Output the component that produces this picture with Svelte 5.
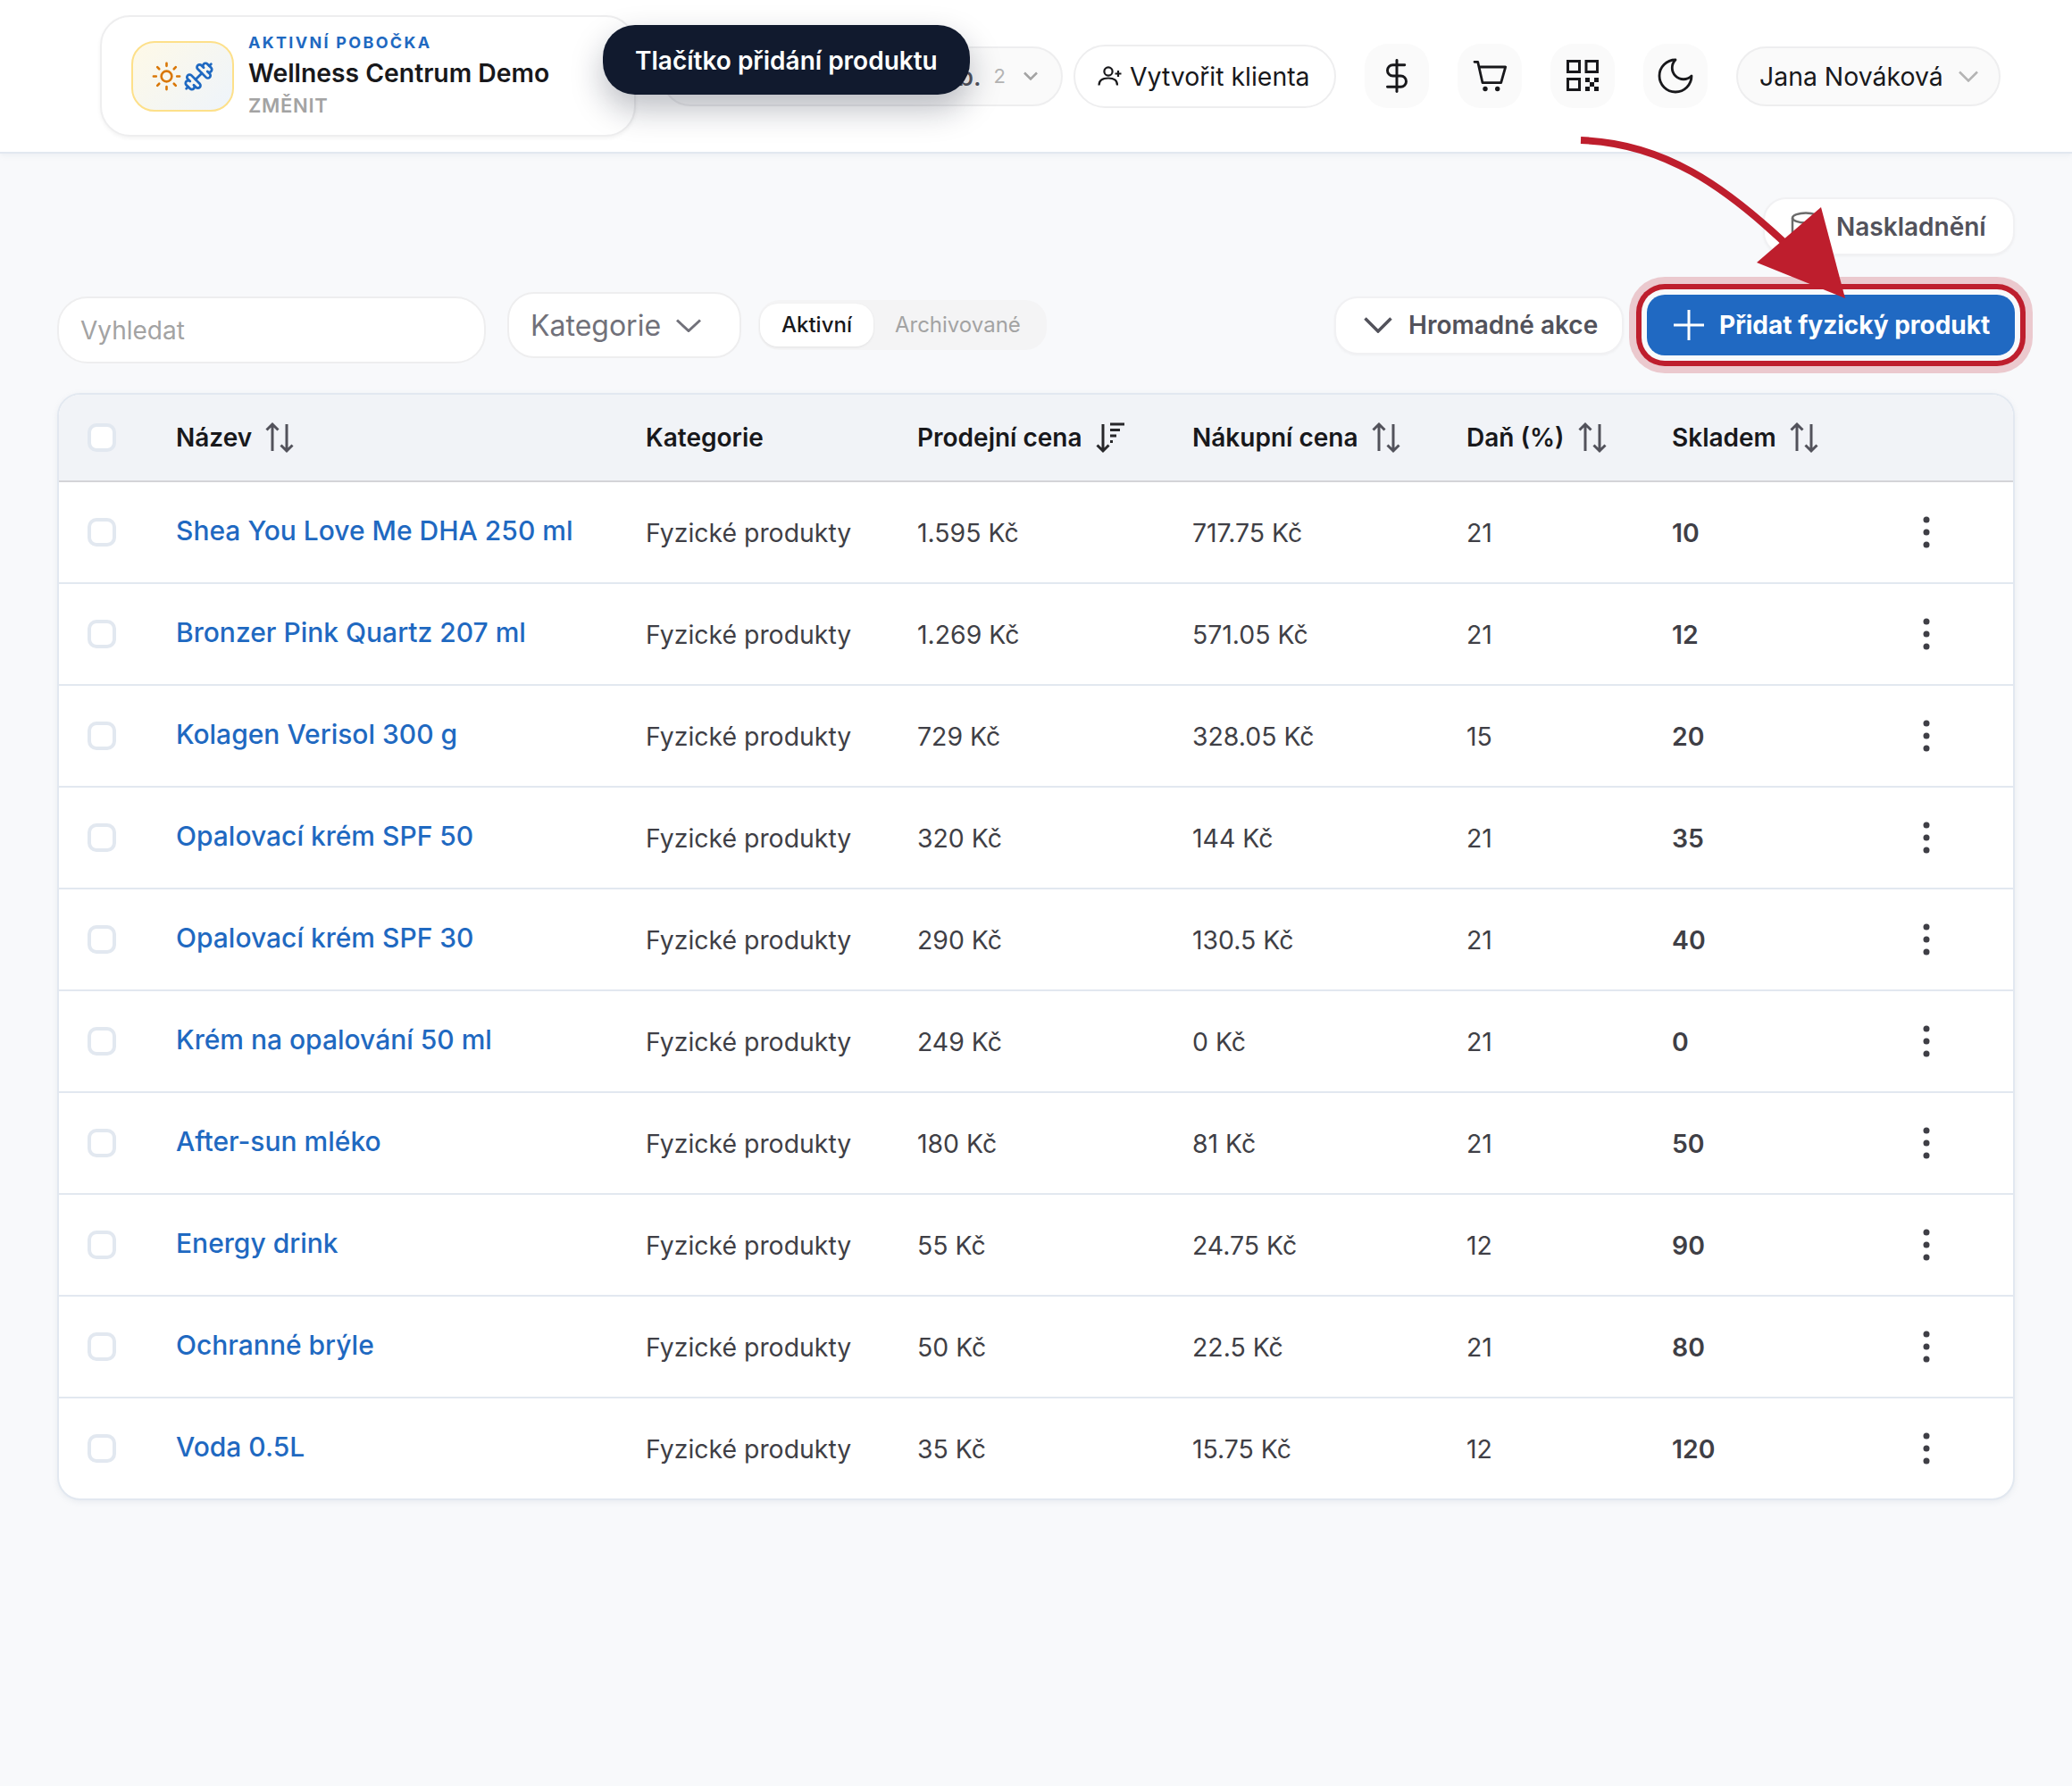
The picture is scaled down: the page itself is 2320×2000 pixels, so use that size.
<script>
  const products = [
    { name: 'Shea You Love Me DHA 250 ml', price: '1.595 Kč', cost: '717.75 Kč', tax: 21, stock: 10 },
    { name: 'Bronzer Pink Quartz 207 ml', price: '1.269 Kč', cost: '571.05 Kč', tax: 21, stock: 12 },
    { name: 'Kolagen Verisol 300 g', price: '729 Kč', cost: '328.05 Kč', tax: 15, stock: 20 },
    { name: 'Opalovací krém SPF 50', price: '320 Kč', cost: '144 Kč', tax: 21, stock: 35 },
    { name: 'Opalovací krém SPF 30', price: '290 Kč', cost: '130.5 Kč', tax: 21, stock: 40 },
    { name: 'Krém na opalování 50 ml', price: '249 Kč', cost: '0 Kč', tax: 21, stock: 0 },
    { name: 'After-sun mléko', price: '180 Kč', cost: '81 Kč', tax: 21, stock: 50 },
    { name: 'Energy drink', price: '55 Kč', cost: '24.75 Kč', tax: 12, stock: 90 },
    { name: 'Ochranné brýle', price: '50 Kč', cost: '22.5 Kč', tax: 21, stock: 80 },
    { name: 'Voda 0.5L', price: '35 Kč', cost: '15.75 Kč', tax: 12, stock: 120 },
  ];
</script>

{#snippet sortIcon()}
  <svg class="sort" width="34" height="36" viewBox="0 0 34 36" fill="none" stroke="#52525b" stroke-width="3">
    <path d="M9 3v30M2.500 9.500 9 3l6.500 6.500" />
    <path d="M25 3v30M18.500 26.500 25 33l6.500-6.500" />
  </svg>
{/snippet}

<div class="page">
  <header class="topbar">
    <div class="branch">
      <div class="branch-logo">
        <svg width="35" height="35" viewBox="0 0 24 24" fill="none" stroke="#d97706" stroke-width="1.8" stroke-linecap="round">
          <circle cx="12" cy="12" r="4" />
          <path d="M12 2v2M12 20v2M4.930 4.930l1.410 1.410M17.660 17.660l1.410 1.410M2 12h2M20 12h2M6.340 17.660l-1.410 1.410M19.070 4.930l-1.410 1.410" />
        </svg>
        <svg width="35" height="35" viewBox="0 0 24 24" fill="none" stroke="#1f69c1" stroke-width="1.900" stroke-linecap="round" stroke-linejoin="round">
          <g transform="translate(24 0) scale(-1 1)">
            <path d="M14.400 14.400 9.600 9.600" />
            <path d="M18.657 21.485a2 2 0 1 1-2.829-2.828l-1.767 1.768a2 2 0 1 1-2.829-2.829l6.364-6.364a2 2 0 1 1 2.829 2.829l-1.768 1.767a2 2 0 1 1 2.828 2.829z" />
            <path d="m21.500 21.500-1.400-1.400" />
            <path d="M3.900 3.900 2.500 2.500" />
            <path d="M6.404 12.768a2 2 0 1 1-2.829-2.829l1.768-1.767a2 2 0 1 1-2.828-2.829l2.828-2.828a2 2 0 1 1 2.829 2.828l1.767-1.768a2 2 0 1 1 2.829 2.829z" />
          </g>
        </svg>
      </div>
      <div class="branch-text">
        <div class="branch-label">AKTIVNÍ POBOČKA</div>
        <div class="branch-name">Wellness Centrum Demo</div>
        <div class="branch-change">ZMĚNIT</div>
      </div>
    </div>

    <div class="pill branch-count">
      <span class="count-label">Pob.</span>
      <span class="count-num">2</span>
      <svg width="16" height="10" viewBox="0 0 16 10" fill="none" stroke="#a3a3a3" stroke-width="2.500"><path d="M1 1.500 8 8.500l7-7" /></svg>
    </div>

    <button class="pill create-client">
      <svg width="27" height="22" viewBox="0 0 27 22" fill="none" stroke="#18181b" stroke-width="2.200">
        <circle cx="12" cy="6" r="4.600" />
        <path d="M1.500 21.500c0-5.500 4-8 10.500-8s10 2.500 10 8" />
        <path d="M19.500 8.500h7M23 5v7" />
      </svg>
      Vytvořit klienta
    </button>

    <button class="icon-btn" aria-label="Ceny">
      <svg width="42" height="42" viewBox="0 0 24 24" fill="none" stroke="#18181b" stroke-width="1.700" stroke-linecap="round" stroke-linejoin="round">
        <path d="M12 2v20" />
        <path d="M17 5H9.500a3.500 3.500 0 0 0 0 7h5a3.500 3.500 0 0 1 0 7H6" />
      </svg>
    </button>
    <button class="icon-btn" aria-label="Košík">
      <svg width="38" height="38" viewBox="0 0 38 38" fill="none" stroke="#18181b" stroke-width="2.800" stroke-linejoin="round" stroke-linecap="round">
        <path d="M2 3.300h3.700L11 26.700h20.700L36.700 9H7" />
        <circle cx="14" cy="33.500" r="2.700" fill="#18181b" stroke="none" />
        <circle cx="27.700" cy="33.500" r="2.700" fill="#18181b" stroke="none" />
      </svg>
    </button>
    <button class="icon-btn" aria-label="QR kód">
      <svg width="36" height="36" viewBox="0 0 36 36" fill="none" stroke="#18181b" stroke-width="3">
        <rect x="1.500" y="1.500" width="13" height="12" />
        <rect x="22" y="1.500" width="12.500" height="12" />
        <rect x="1.500" y="21.500" width="13" height="12" />
        <path fill="#18181b" stroke="none" d="M21 20h5v5h-5zM31 20h5v5h-5zM26 25h5v5h-5zM21 30h5v5h-5zM31 30h5v5h-5z" />
      </svg>
    </button>
    <button class="icon-btn" aria-label="Tmavý režim">
      <svg width="48" height="48" viewBox="0 0 24 24" fill="none" stroke="#18181b" stroke-width="1.400" stroke-linecap="round" stroke-linejoin="round">
        <path d="M12 3a6 6 0 0 0 9 9 9 9 0 1 1-9-9Z" />
      </svg>
    </button>

    <button class="pill user-menu">
      Jana Nováková
      <svg width="22" height="13" viewBox="0 0 22 13" fill="none" stroke="#b4b4b4" stroke-width="2.500"><path d="M1 1.500 11 11.500l10-10" /></svg>
    </button>
  </header>

  <main class="content">
    <div class="top-actions">
      <button class="ghost-btn restock">
        <svg width="36" height="36" viewBox="0 0 36 36" fill="none" stroke="#6b6b6b" stroke-width="2.500">
          <ellipse cx="18" cy="8" rx="15" ry="5.500" />
          <path d="M3 8v20c0 3 6.700 5.500 15 5.500S33 31 33 28V8" />
        </svg>
        Naskladnění
      </button>
    </div>

    <div class="filters">
      <input class="search" type="text" placeholder="Vyhledat" />
      <button class="category">
        Kategorie
        <svg width="28" height="15" viewBox="0 0 28 15" fill="none" stroke="#71717a" stroke-width="3"><path d="M1 1.500 14 13.500 27 1.500" /></svg>
      </button>
      <div class="tabs">
        <span class="tab active">Aktivní</span>
        <span class="tab">Archivované</span>
      </div>
      <div class="filter-actions">
        <button class="ghost-btn bulk">
          <svg width="32" height="18" viewBox="0 0 32 18" fill="none" stroke="#52525b" stroke-width="3.500"><path d="M1.500 1.500 16 16 30.500 1.500" /></svg>
          Hromadné akce
        </button>
        <button class="primary-btn">
          <svg width="36" height="36" viewBox="0 0 36 36" fill="none" stroke="#fff" stroke-width="3"><path d="M18 1v34M1 18h34" /></svg>
          Přidat fyzický produkt
        </button>
      </div>
    </div>

    <div class="table-wrap">
      <table>
        <colgroup>
          <col style="width: 109px" />
          <col style="width: 526px" />
          <col style="width: 304px" />
          <col style="width: 308px" />
          <col style="width: 307px" />
          <col style="width: 230px" />
          <col style="width: 250px" />
          <col />
        </colgroup>
        <thead>
          <tr>
            <th class="check-cell"><span class="checkbox"></span></th>
            <th><span class="th-inner">Název {@render sortIcon()}</span></th>
            <th>Kategorie</th>
            <th>
              <span class="th-inner">Prodejní cena
                <svg class="sort" width="34" height="36" viewBox="0 0 34 36" fill="none" stroke="#27272a" stroke-width="3">
                  <path d="M9 3v30M2.500 26.500 9 33l6.500-6.500" />
                  <path d="M17 3h16M17 9.500h11M17 16h7M17 22.500h3" />
                </svg>
              </span>
            </th>
            <th><span class="th-inner">Nákupní cena {@render sortIcon()}</span></th>
            <th><span class="th-inner">Daň (%) {@render sortIcon()}</span></th>
            <th><span class="th-inner">Skladem {@render sortIcon()}</span></th>
            <th></th>
          </tr>
        </thead>
        <tbody>
          {#each products as p}
            <tr>
              <td class="check-cell"><span class="checkbox"></span></td>
              <td><a class="product-link" href="#top">{p.name}</a></td>
              <td>Fyzické produkty</td>
              <td>{p.price}</td>
              <td>{p.cost}</td>
              <td>{p.tax}</td>
              <td class="stock">{p.stock}</td>
              <td class="row-menu">
                <svg width="8" height="36" viewBox="0 0 8 36" fill="#3f3f46">
                  <circle cx="4" cy="4" r="3.500" />
                  <circle cx="4" cy="18" r="3.500" />
                  <circle cx="4" cy="32" r="3.500" />
                </svg>
              </td>
            </tr>
          {/each}
        </tbody>
      </table>
    </div>
  </main>

  <div class="tour-tooltip">Tlačítko přidání produktu</div>

  <svg class="tour-arrow" width="2320" height="500" viewBox="0 0 2320 500" fill="none">
    <path d="M1770 157C1860 160 1930 205 2012 285" stroke="#be1e2d" stroke-width="8" />
    <path d="M2066 334 2039 232 1967 294Z" fill="#be1e2d" />
  </svg>
</div>

<style>
  :global(body) {
    margin: 0;
    background: #f8f9fb;
  }

  .page {
    position: relative;
    min-height: 2000px;
    font-family: Inter, "Liberation Sans", sans-serif;
    color: #3f3f46;
    background: #f8f9fb;
  }

  button {
    font-family: inherit;
    cursor: pointer;
  }

  .topbar {
    box-sizing: border-box;
    height: 172px;
    display: flex;
    align-items: center;
    padding-left: 112px;
    background: #fff;
    border-bottom: 2px solid #e2e8f0;
    box-shadow: 0 2px 6px rgba(148, 163, 184, 0.12);
  }

  .branch {
    box-sizing: border-box;
    width: 600px;
    height: 136px;
    display: flex;
    align-items: center;
    gap: 16px;
    padding-left: 33px;
    background: #fff;
    border: 2px solid #eeeeef;
    border-radius: 34px;
    box-shadow: 0 2px 4px rgba(0, 0, 0, 0.05);
  }

  .branch-logo {
    box-sizing: border-box;
    width: 115px;
    height: 79px;
    display: flex;
    align-items: center;
    justify-content: center;
    gap: 1px;
    border: 2px solid #fde08a;
    border-radius: 26px;
    background: linear-gradient(135deg, #fef9e7, #eef4fb);
  }

  .branch-text {
    display: flex;
    flex-direction: column;
    gap: 6px;
    padding-bottom: 2px;
  }

  .branch-label {
    font-size: 18px;
    line-height: 24px;
    font-weight: 700;
    letter-spacing: 2.300px;
    color: #1f69c1;
  }

  .branch-name {
    font-size: 28.300px;
    line-height: 32px;
    font-weight: 600;
    color: #18181b;
  }

  .branch-change {
    font-size: 22px;
    line-height: 28px;
    font-weight: 600;
    color: #a3a3a3;
    letter-spacing: 0.700px;
  }

  .pill {
    box-sizing: border-box;
    display: flex;
    align-items: center;
    border: 2px solid #eeeeef;
    background: #fff;
    border-radius: 36px;
    font-size: 28.400px;
    color: #18181b;
  }

  .branch-count {
    width: 450px;
    height: 67px;
    margin-left: 28px;
    justify-content: flex-end;
    gap: 14px;
    padding-right: 26px;
    background: #fafafa;
  }

  .count-label {
    font-weight: 500;
    color: #52525b;
  }

  .count-num {
    font-size: 22px;
    color: #b4b4b4;
    margin-right: 6px;
  }

  .create-client {
    width: 294px;
    height: 71px;
    margin-left: 12px;
    padding: 0 0 0 25px;
    gap: 9px;
  }

  .icon-btn {
    width: 72px;
    height: 72px;
    margin-left: 32px;
    display: flex;
    align-items: center;
    justify-content: center;
    padding: 0;
    border: 0;
    border-radius: 26px;
    background: #fafafa;
  }

  .user-menu {
    width: 296px;
    height: 67px;
    margin-left: 32px;
    padding: 0 0 0 24px;
    gap: 17px;
    background: #fafafa;
  }

  .content {
    padding: 49px 64px 0;
  }

  .top-actions {
    display: flex;
    justify-content: flex-end;
  }

  .ghost-btn {
    box-sizing: border-box;
    display: flex;
    align-items: center;
    background: #fff;
    border: 2px solid #f1f1f3;
    border-radius: 26px;
    font-size: 28px;
    font-weight: 600;
    color: #52525b;
    box-shadow: 0 1px 3px rgba(0, 0, 0, 0.04);
  }

  .restock {
    width: 282px;
    height: 65px;
    padding: 0 0 0 28px;
    gap: 16px;
  }

  .filters {
    display: flex;
    align-items: center;
    margin-top: 35px;
  }

  .search {
    box-sizing: border-box;
    width: 480px;
    height: 75px;
    margin-top: 11px;
    padding: 0 24px;
    font-family: inherit;
    font-size: 28px;
    color: #3f3f46;
    background: #fff;
    border: 2px solid #eeeeef;
    border-radius: 34px;
    outline: none;
  }

  .search::placeholder {
    color: #a3a3a3;
  }

  .category {
    box-sizing: border-box;
    width: 262px;
    height: 74px;
    margin-left: 24px;
    display: flex;
    align-items: center;
    gap: 17px;
    padding: 0 0 0 24px;
    font-size: 32px;
    color: #71717a;
    background: #fff;
    border: 2px solid #eeeeef;
    border-radius: 30px;
  }

  .tabs {
    box-sizing: border-box;
    width: 323px;
    height: 56px;
    margin-left: 19px;
    display: flex;
    align-items: center;
    padding: 0 2px;
    background: #f4f4f5;
    border-radius: 24px;
  }

  .tab {
    padding: 0 24px;
    line-height: 48px;
    font-size: 24px;
    color: #a3a3a3;
    border-radius: 20px;
  }

  .tab.active {
    font-weight: 500;
    color: #18181b;
    background: #fff;
    box-shadow: 0 1px 3px rgba(0, 0, 0, 0.08);
  }

  .filter-actions {
    margin-left: auto;
    display: flex;
    align-items: center;
    gap: 26px;
  }

  .bulk {
    width: 324px;
    height: 65px;
    padding: 0 0 0 31px;
    gap: 18px;
  }

  .primary-btn {
    box-sizing: border-box;
    width: 412px;
    height: 68px;
    display: flex;
    align-items: center;
    gap: 16px;
    padding: 0 0 0 29px;
    font-size: 28px;
    font-weight: 700;
    color: #fff;
    background: #2069c2;
    border: 0;
    border-radius: 20px;
    box-shadow:
      0 0 0 6px #f8f9fb,
      0 0 0 12px #be1e2d,
      0 0 0 20px rgba(190, 30, 45, 0.22);
  }

  .table-wrap {
    margin-top: 33px;
    background: #fff;
    border: 2px solid #e2e8f0;
    border-radius: 26px;
    overflow: hidden;
    box-shadow: 0 2px 6px rgba(148, 163, 184, 0.15);
  }

  table {
    width: 100%;
    table-layout: fixed;
    border-collapse: separate;
    border-spacing: 0;
    font-size: 28px;
  }

  th {
    box-sizing: border-box;
    height: 98px;
    padding: 0 0 0 22px;
    text-align: left;
    font-weight: 600;
    color: #18181b;
    background: #f1f3f7;
    border-bottom: 2px solid #d4d4d8;
  }

  td {
    box-sizing: border-box;
    height: 114px;
    padding: 0 0 0 22px;
    font-size: 28.400px;
    border-bottom: 2px solid #e2e8f0;
    color: #3f3f46;
  }

  tbody tr:last-child td {
    height: 112px;
    border-bottom: 0;
  }

  .th-inner {
    display: inline-flex;
    align-items: center;
    gap: 14px;
  }

  .sort {
    flex: none;
  }

  .check-cell {
    padding-left: 32px;
    font-size: 0;
  }

  .checkbox {
    box-sizing: border-box;
    display: inline-block;
    width: 32px;
    height: 32px;
    background: #fff;
    border: 4px solid #e2e8f0;
    border-radius: 10px;
  }

  .product-link {
    display: block;
    margin-bottom: 5px;
    font-size: 30px;
    font-weight: 500;
    color: #1f69c1;
    text-decoration: none;
  }

  .stock {
    font-weight: 600;
  }

  .row-menu {
    padding-left: 53px;
    font-size: 0;
  }

  .tour-tooltip {
    position: absolute;
    left: 675px;
    top: 28px;
    box-sizing: border-box;
    height: 78px;
    padding: 2px 36px 0;
    display: flex;
    align-items: center;
    font-size: 28px;
    font-weight: 600;
    color: #fff;
    background: #111a2e;
    border-radius: 36px;
    box-shadow: 0 16px 36px rgba(15, 23, 42, 0.28);
  }

  .tour-arrow {
    position: absolute;
    left: 0;
    top: 0;
    pointer-events: none;
  }
</style>
